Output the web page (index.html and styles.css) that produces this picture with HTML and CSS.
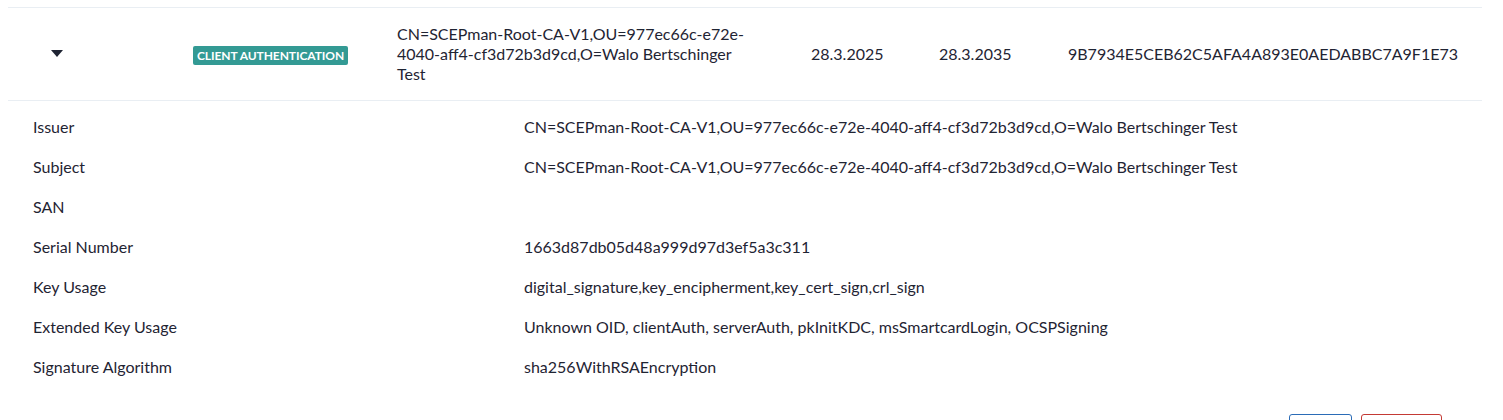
FILE: index.html
```html
<!DOCTYPE html>
<html>
<head>
<meta charset="utf-8">
<link rel="stylesheet" href="styles.css">
</head>
<body>
<div class="table">
  <div class="row">
    <div class="cell toggle">
      <svg class="chev" width="12" height="7" viewBox="0 0 12 7"><path d="M0 0H12L6 7Z" fill="#1f2433"/></svg>
    </div>
    <div class="cell badge-cell"><span class="badge">CLIENT AUTHENTICATION</span></div>
    <div class="cell subject">CN=SCEPman-Root-CA-V1,OU=977ec66c-e72e-4040-aff4-cf3d72b3d9cd,O=Walo Bertschinger Test</div>
    <div class="cell date">28.3.2025</div>
    <div class="cell date">28.3.2035</div>
    <div class="cell thumb">9B7934E5CEB62C5AFA4A893E0AEDABBC7A9F1E73</div>
  </div>
  <div class="details">
    <div class="drow"><div class="dlabel">Issuer</div><div class="dval">CN=SCEPman-Root-CA-V1,OU=977ec66c-e72e-4040-aff4-cf3d72b3d9cd,O=Walo Bertschinger Test</div></div>
    <div class="drow"><div class="dlabel">Subject</div><div class="dval">CN=SCEPman-Root-CA-V1,OU=977ec66c-e72e-4040-aff4-cf3d72b3d9cd,O=Walo Bertschinger Test</div></div>
    <div class="drow"><div class="dlabel">SAN</div><div class="dval"></div></div>
    <div class="drow"><div class="dlabel">Serial Number</div><div class="dval">1663d87db05d48a999d97d3ef5a3c311</div></div>
    <div class="drow"><div class="dlabel">Key Usage</div><div class="dval">digital_signature,key_encipherment,key_cert_sign,crl_sign</div></div>
    <div class="drow"><div class="dlabel">Extended Key Usage</div><div class="dval">Unknown OID, clientAuth, serverAuth, pkInitKDC, msSmartcardLogin, OCSPSigning</div></div>
    <div class="drow"><div class="dlabel">Signature Algorithm</div><div class="dval">sha256WithRSAEncryption</div></div>
    <div class="actions">
      <button class="btn btn-blue" aria-label="Download"></button>
      <button class="btn btn-red" aria-label="Revoke"></button>
    </div>
  </div>
</div>
</body>
</html>
```
FILE: styles.css
```css
html, body {
  margin: 0;
  padding: 0;
  background: #ffffff;
}
body {
  padding: 7px 8px 0 8px;
  font-family: Lato, "Liberation Sans", sans-serif;
  font-size: 16px;
  line-height: 20px;
  color: #1f2433;
  overflow: hidden;
  height: 413px;
}
.table {
  width: 1474px;
  border-top: 1px solid #e9eef3;
}
.row {
  display: grid;
  grid-template-columns: 177px 204px 414px 128px 129px 422px;
  align-items: center;
  height: 92px;
  border-bottom: 1px solid #e9eef3;
}
.cell {
  padding-left: 8px;
}
.toggle {
  padding-left: 43px;
  display: flex;
  align-items: center;
}
.chev {
  display: block;
  margin-top: -2px;
}
.badge {
  display: inline-block;
  background: #339a94;
  color: #ffffff;
  font-weight: 700;
  font-size: 12px;
  line-height: 19px;
  letter-spacing: -0.08px;
  padding: 0 4px;
  border-radius: 2px;
  text-transform: uppercase;
}
.subject {
  width: 355px;
}
.details {
  padding: 6px 0 0 25px;
}
.drow {
  display: grid;
  grid-template-columns: 491px 1fr;
  height: 40px;
  align-items: center;
}
.actions {
  display: flex;
  justify-content: flex-end;
  gap: 9px;
  margin-top: 27px;
  padding-right: 40px;
}
.btn {
  font-family: Lato, "Liberation Sans", sans-serif;
  font-size: 16px;
  background: #ffffff;
  height: 34px;
  border-radius: 3px;
  padding: 0 12px;
}
.btn-blue {
  width: 63px;
  border: 1px solid #2b6cb7;
  color: #2b6cb7;
}
.btn-red {
  width: 81px;
  border: 1px solid #c43a35;
  color: #c43a35;
}
```
